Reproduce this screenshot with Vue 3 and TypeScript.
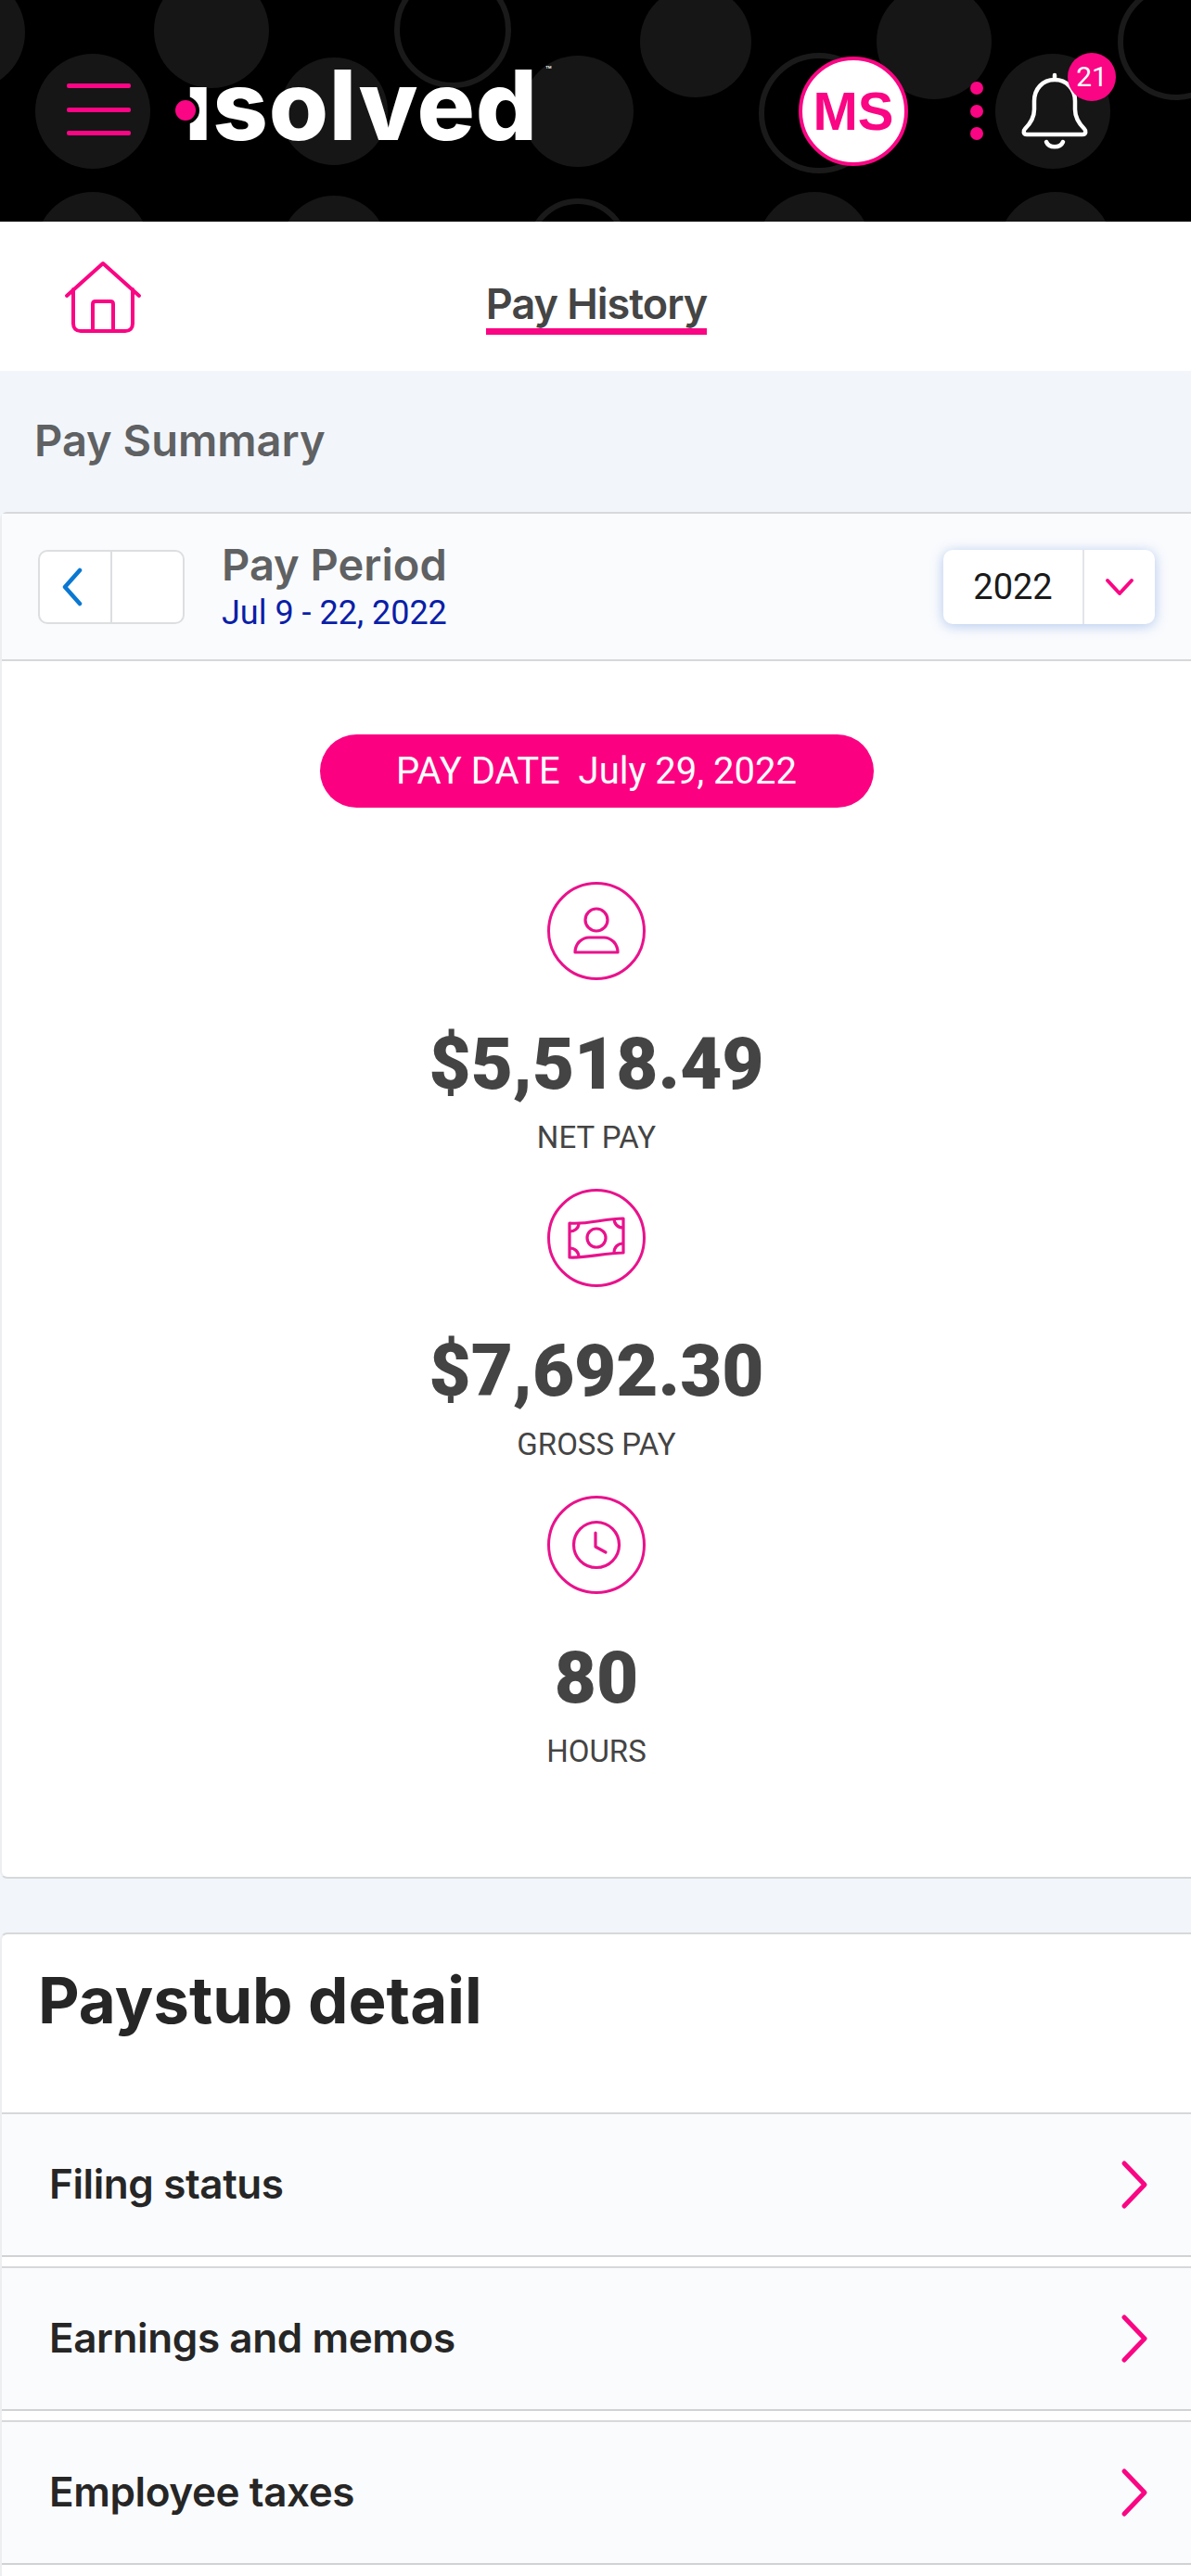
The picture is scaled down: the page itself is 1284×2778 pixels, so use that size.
<template>
  <div class="page">
    <header class="topbar">
      <svg class="pattern" width="1284" height="239" viewBox="0 0 1284 239">
        <circle v-for="(d, i) in dots" :key="i" :cx="d[0]" :cy="d[1]" :r="d[2]" fill="#161616" />
        <circle v-for="(d, i) in rings" :key="'r' + i" :cx="d[0]" :cy="d[1]" :r="d[2]" fill="none" stroke="#1a1a1a" stroke-width="6" />
      </svg>
      <button class="burger" aria-label="Menu"><span></span><span></span><span></span></button>
      <div class="logo"><i class="logo-dot"></i><span>ısolved</span><sup>™</sup></div>
      <div class="spacer"></div>
      <div class="avatar">MS</div>
      <div class="kebab"><span></span><span></span><span></span></div>
      <div class="bell">
        <svg width="76" height="84" viewBox="0 0 76 84" fill="none" stroke="#fff" stroke-width="4.5" stroke-linecap="round" stroke-linejoin="round">
          <path d="M38 3v5M38 8c-13 0-22 10-22 23v9c0 9-4 15-10 21-2 2-2 6 2 6h60c4 0 4-4 2-6-6-6-10-12-10-21v-9c0-13-9-23-22-23Z" />
          <path d="M29 75c3 7 15 7 18 0" />
        </svg>
        <span class="badge">21</span>
      </div>
    </header>

    <nav class="subnav">
      <svg class="home" width="84" height="78" viewBox="0 0 84 78" fill="none" stroke="#fa0584" stroke-width="4" stroke-linecap="round" stroke-linejoin="round">
        <path d="M3 38 42 3l39 35M10 31v37c0 5 3 8 8 8h48c5 0 8-3 8-8V31" />
        <path d="M31 76V47c0-2 1-3 3-3h16c2 0 3 1 3 3v29" />
      </svg>
      <span class="subnav-title">Pay History</span>
    </nav>

    <h2 class="section-title">Pay Summary</h2>

    <section class="card summary">
      <div class="period">
        <div class="pager">
          <button class="pager-btn">
            <svg width="24" height="42" viewBox="0 0 24 42" fill="none" stroke="#0a78d2" stroke-width="4.5" stroke-linecap="round" stroke-linejoin="round"><path d="M20 3 4 21l16 18" /></svg>
          </button>
          <button class="pager-btn"></button>
        </div>
        <div class="period-text">
          <div class="period-label">Pay Period</div>
          <div class="period-dates">Jul 9 - 22, 2022</div>
        </div>
        <div class="year">
          <span class="year-value">2022</span>
          <span class="year-caret">
            <svg width="32" height="22" viewBox="0 0 32 22" fill="none" stroke="#fa0584" stroke-width="4" stroke-linecap="round" stroke-linejoin="round"><path d="M3 4l13 14L29 4" /></svg>
          </span>
        </div>
      </div>

      <div class="totals">
        <div class="pay-date">PAY DATE&nbsp; July 29, 2022</div>
        <div v-for="t in totals" :key="t.label" class="total">
          <div class="total-icon">
            <svg v-if="t.icon === 'person'" width="50" height="52" viewBox="0 0 50 52" fill="none" stroke="#e9128c" stroke-width="3.2" stroke-linejoin="round">
              <circle cx="25" cy="14" r="12" />
              <path d="M2 49c0-10 8-16 15-16h16c7 0 15 6 15 16Z" />
            </svg>
            <svg v-else-if="t.icon === 'money'" width="62" height="48" viewBox="0 0 62 48" fill="none" stroke="#e9128c" stroke-width="3.2" stroke-linejoin="round">
              <path d="M2 8c18 2 38-5 58-5v37c-20 0-40 6-58 5Z" />
              <circle cx="31" cy="24" r="10" />
              <path d="M2 17c5 0 10-3 10-9M60 13c-6 0-10-4-10-10M2 35c6 0 10 4 10 10M60 30c-6 0-10 4-10 10" />
            </svg>
            <svg v-else width="54" height="54" viewBox="0 0 54 54" fill="none" stroke="#e9128c" stroke-width="3.2" stroke-linecap="round" stroke-linejoin="round">
              <circle cx="27" cy="27" r="24.5" />
              <path d="M26 14v15l11 6" />
            </svg>
          </div>
          <div class="total-value">{{ t.value }}</div>
          <div class="total-label">{{ t.label }}</div>
        </div>
      </div>
    </section>

    <section class="card detail">
      <h1 class="detail-title">Paystub detail</h1>
      <div v-for="r in rows" :key="r" class="row">
        <span>{{ r }}</span>
        <svg width="30" height="56" viewBox="0 0 30 56" fill="none" stroke="#fa0584" stroke-width="5" stroke-linecap="round" stroke-linejoin="round"><path d="M4 5l22 23L4 51" /></svg>
      </div>
    </section>
  </div>
</template>

<script setup lang="ts">
// background pattern of the top bar: [cx, cy, r]
const dots: number[][] = [
  [-35, 35, 62], [228, 33, 62], [750, 45, 60], [1007, 45, 62],
  [100, 120, 62], [360, 120, 58], [623, 120, 60], [1135, 120, 62],
  [100, 269, 62], [360, 269, 58], [878, 269, 62], [1138, 269, 62],
]
const rings: number[][] = [
  [488, 32, 60], [1268, 45, 60], [883, 122, 62], [623, 269, 52],
]

const totals = [
  { icon: 'person', value: '$5,518.49', label: 'NET PAY' },
  { icon: 'money', value: '$7,692.30', label: 'GROSS PAY' },
  { icon: 'clock', value: '80', label: 'HOURS' },
]

const rows = ['Filing status', 'Earnings and memos', 'Employee taxes']
</script>

<style>
html, body {
  margin: 0;
  background: #f2f6fb;
  overflow: hidden;
}
</style>

<style scoped>
.page {
  width: 1284px;
  height: 2778px;
  overflow: hidden;
  background: #f2f6fb;
  font-family: Roboto, "Liberation Sans", sans-serif;
}

.topbar {
  position: relative;
  height: 239px;
  background: #000;
  display: flex;
  align-items: center;
  overflow: hidden;
  box-sizing: border-box;
  padding: 0 109px 0 72px;
}

.pattern {
  position: absolute;
  left: 0;
  top: 0;
}

.burger {
  position: relative;
  width: 69px;
  height: 56px;
  margin-top: -3px;
  padding: 0;
  border: 0;
  background: none;
  display: flex;
  flex-direction: column;
  justify-content: space-between;
}

.burger span {
  display: block;
  height: 5px;
  border-radius: 2px;
  background: #fa0584;
}

.logo {
  position: relative;
  margin-left: 48px;
  margin-top: -14px;
  display: flex;
  align-items: baseline;
  color: #fff;
  font-family: Inter, "Liberation Sans", sans-serif;
  font-weight: 800;
  font-size: 104px;
  line-height: 104px;
  letter-spacing: 0.8px;
}

.logo-dot {
  position: absolute;
  left: -4px;
  top: 43px;
  width: 22px;
  height: 22px;
  border: 4px solid #000;
  border-radius: 50%;
  background: #fa0584;
}

.logo span {
  padding-left: 10px;
}

.logo sup {
  position: absolute;
  right: -15px;
  top: 9px;
  font-size: 11px;
  line-height: 11px;
  letter-spacing: 0;
  font-weight: 400;
}

.spacer {
  flex: 1;
}

.avatar {
  position: relative;
  width: 118px;
  height: 118px;
  border: 4px solid #fa0584;
  border-radius: 50%;
  box-sizing: border-box;
  background: #fff;
  color: #fa0584;
  display: flex;
  align-items: center;
  justify-content: center;
  font-family: "Liberation Sans", sans-serif;
  font-size: 58px;
  font-weight: 700;
}

.kebab {
  position: relative;
  margin-left: 67px;
  width: 14px;
  height: 63px;
  display: flex;
  flex-direction: column;
  justify-content: space-between;
}

.kebab span {
  height: 14px;
  border-radius: 50%;
  background: #fa0584;
}

.bell {
  position: relative;
  margin-left: 39px;
  width: 76px;
  height: 84px;
}

.badge {
  position: absolute;
  left: 52px;
  top: -21px;
  width: 52px;
  height: 52px;
  border-radius: 50%;
  background: #fa0584;
  color: #fff;
  display: flex;
  align-items: center;
  justify-content: center;
  font-size: 30px;
}

.subnav {
  position: relative;
  height: 161px;
  background: #fff;
  display: flex;
  align-items: center;
  justify-content: center;
}

.home {
  position: absolute;
  left: 69px;
  top: 42px;
}

.subnav-title {
  margin-top: 23px;
  margin-left: 2px;
  color: #454545;
  font-family: Inter, "Liberation Sans", sans-serif;
  font-size: 45px;
  font-weight: 600;
  line-height: 52px;
  letter-spacing: -1px;
  border-bottom: 7px solid #fa0584;
}

.section-title {
  margin: 0;
  height: 152px;
  box-sizing: border-box;
  padding: 45px 37px 0;
  color: #5f6163;
  font-family: Inter, "Liberation Sans", sans-serif;
  font-size: 47px;
  font-weight: 600;
  line-height: 60px;
}

.card {
  background: #fff;
  border: 2px solid #d6d8da;
  border-left-color: #eceef0;
  border-right: 0;
  border-radius: 8px 0 0 8px;
  box-sizing: border-box;
}

.summary {
  height: 1474px;
}

.period {
  height: 159px;
  background: #fafbfd;
  border-bottom: 2px solid #d6d8da;
  box-sizing: border-box;
  display: flex;
  align-items: center;
  padding: 0 39px;
}

.pager {
  display: flex;
  width: 158px;
  height: 80px;
  box-sizing: border-box;
  border: 2px solid #dcdee0;
  border-radius: 10px;
  background: #fff;
}

.pager-btn {
  flex: 1;
  padding: 0;
  border: 0;
  background: none;
  display: flex;
  align-items: center;
  justify-content: center;
}

.pager-btn + .pager-btn {
  border-left: 2px solid #dcdee0;
}

.pager-btn svg {
  margin-right: 6px;
}

.period-text {
  margin-left: 40px;
  flex: 1;
}

.period-label {
  margin-top: -2px;
  color: #5f6163;
  font-family: Inter, "Liberation Sans", sans-serif;
  font-size: 47px;
  font-weight: 600;
  line-height: 54px;
}

.period-dates {
  margin-top: 4px;
  color: #0a1fa8;
  font-size: 36px;
  line-height: 42px;
}

.year {
  display: flex;
  width: 228px;
  height: 80px;
  border-radius: 10px;
  background: #fff;
  box-shadow: 0 2px 14px rgba(90, 140, 220, 0.45);
}

.year-value {
  flex: 1;
  display: flex;
  align-items: center;
  justify-content: center;
  color: #1a1a1a;
  font-size: 38px;
  border-right: 2px solid #e3e5e8;
}

.year-caret {
  width: 76px;
  display: flex;
  align-items: center;
  justify-content: center;
}

.totals {
  display: flex;
  flex-direction: column;
  align-items: center;
  padding-top: 79px;
}

.pay-date {
  width: 597px;
  height: 79px;
  border-radius: 40px;
  background: #fc0082;
  color: #fff;
  display: flex;
  align-items: center;
  justify-content: center;
  font-size: 40px;
  margin-bottom: 80px;
}

.total {
  display: flex;
  flex-direction: column;
  align-items: center;
  height: 331px;
}

.total-icon {
  width: 106px;
  height: 106px;
  box-sizing: border-box;
  border: 3px solid #e9128c;
  border-radius: 50%;
  display: flex;
  align-items: center;
  justify-content: center;
}

.total-value {
  margin-top: 45px;
  color: #444;
  font-size: 78px;
  font-weight: 900;
  line-height: 92px;
}

.total-label {
  margin-top: 13px;
  color: #444;
  font-size: 33px;
  line-height: 40px;
}

.detail {
  margin-top: 58px;
  height: 900px;
}

.detail-title {
  margin: 0;
  height: 192px;
  box-sizing: border-box;
  padding: 33px 39px 0;
  color: #262626;
  font-family: Inter, "Liberation Sans", sans-serif;
  font-size: 69px;
  font-weight: 700;
  line-height: 76px;
}

.row {
  height: 156px;
  margin-bottom: 10px;
  box-sizing: border-box;
  background: #fafbfd;
  border-top: 2px solid #d6d8da;
  border-bottom: 2px solid #d0d2d4;
  display: flex;
  align-items: center;
  justify-content: space-between;
  padding: 0 46px 0 51px;
  color: #262626;
  font-family: Inter, "Liberation Sans", sans-serif;
  font-size: 44px;
  font-weight: 600;
  letter-spacing: -0.4px;
}

.row span {
  margin-top: -3px;
}
</style>
